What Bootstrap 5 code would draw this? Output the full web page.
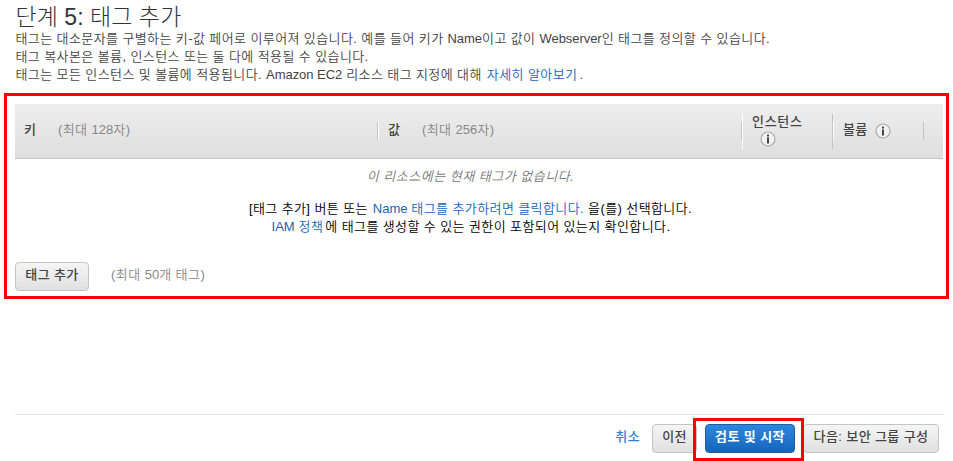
<!DOCTYPE html>
<html lang="ko">
<head>
<meta charset="utf-8">
<meta name="viewport" content="width=device-width, initial-scale=1">
<title>단계 5: 태그 추가</title>
<link href="https://cdn.jsdelivr.net/npm/bootstrap@5.3.0/dist/css/bootstrap.min.css" rel="stylesheet">
<style>
body{font-family:"Liberation Sans","Noto Sans CJK KR",sans-serif;font-size:13px;font-weight:350;line-height:18px;letter-spacing:.4px;color:#444;height:461px;overflow:hidden;background:#fff}
a{color:#1166bb;text-decoration:none}
.latin{letter-spacing:-.05px}
.wizard{height:461px}
.intro{height:93px;padding:5px 0 0 15.5px}
.intro h1{font-size:23px;line-height:25px;font-weight:300;color:#333;letter-spacing:.2px;word-spacing:-.5px}
.intro p{white-space:nowrap}
.intro a{margin:0 2px 0 1px}
.tags-panel{border:3px solid red;margin:0 4px;height:206px;padding:8px 3px 0 8px}
.tags-head{height:55px;background:linear-gradient(#eee,#dedede);border-bottom:1px solid #c4c4c4;font-weight:500}
.tags-head .label{padding-bottom:3px}
.hint{color:#888;font-weight:350;letter-spacing:.45px}
.hint .latin{letter-spacing:0}
.sep-line{width:1px;height:18px;background:#c4c4c4}
.sep-line.light{background:#fff}
.sep-line.tall{height:35px}
.col-key,.col-value{width:362px;padding-left:9px}
.col-key .hint,.col-value .hint{margin-left:21.5px}
.col-inst{width:89px;padding:0 0 2px 9px;letter-spacing:.7px}
.col-vol{width:89px;padding-left:9px}
.info{width:16px;height:16px;display:block}
.col-vol .info{margin-left:7px}
.col-inst .info{margin-left:7.5px}
.empty-state{height:103px;padding:9px 17px 0 0;color:#000;white-space:nowrap}
.empty-state em{color:#777;letter-spacing:.5px}
.guide{margin-top:14px}
.guide a{margin-left:1px}
.guide .policy{margin-right:2px}
.console-btn{height:29px;padding:0 0 3px;font-size:13px;line-height:24px;font-weight:500;letter-spacing:.4px;color:#444;border:1px solid #c4c4c4;border-radius:4px;background:linear-gradient(#f5f5f5,#e0e0e0);white-space:nowrap}
.console-btn.primary{color:#fff;font-weight:700;background:linear-gradient(#2f86dc,#1466bd);border-color:#1a5ea8}
.actions{margin:0 10px 0 15px;border-top:1px solid #e5e5e5;height:47px;padding:9px 4px 0 0;gap:8px}
.cancel{font-weight:500;color:#2e80d8;margin:4px 4px 0 0}
.focus-frame{position:absolute;left:-12px;top:-6px;width:111px;height:43px;border:3px solid red;pointer-events:none}
.btn-add{width:74px}.btn-prev{width:45px}.btn-review{width:90px}.btn-next{width:136px}
.limit{margin:0 0 3px 22px}
</style>
</head>
<body>
<main class="wizard d-flex flex-column">
  <header class="intro">
    <h1 class="m-0">단계 5: 태그 추가</h1>
    <p class="m-0">태그는 대소문자를 구별하는 키-값 페어로 이루어져 있습니다. 예를 들어 키가 <span class="latin">Name</span>이고 값이 <span class="latin">Webserver</span>인 태그를 정의할 수 있습니다.</p>
    <p class="m-0">태그 복사본은 볼륨, 인스턴스 또는 둘 다에 적용될 수 있습니다.</p>
    <p class="m-0">태그는 모든 인스턴스 및 볼륨에 적용됩니다. <span class="latin">Amazon EC2</span> 리소스 태그 지정에 대해 <a href="#">자세히 알아보기</a>.</p>
  </header>
  <section class="tags-panel">
    <div class="tags-head d-flex align-items-center">
      <div class="col-key d-flex label"><span>키</span><span class="hint">(최대 <span class="latin">128</span>자)</span></div>
      <i class="sep-line"></i><i class="sep-line light"></i>
      <div class="col-value d-flex label"><span>값</span><span class="hint">(최대 <span class="latin">256</span>자)</span></div>
      <i class="sep-line"></i><i class="sep-line tall light"></i>
      <div class="col-inst"><div>인스턴스</div>
        <svg class="info" viewBox="0 0 16 16"><circle cx="8" cy="8" r="7" fill="#f1f1f1" stroke="#aaa" stroke-width="1.2"/><path d="M7 3.6h2v2H7zM7 6.4h2v6.2H7z" fill="#444"/></svg>
      </div>
      <i class="sep-line tall"></i><i class="sep-line light"></i>
      <div class="col-vol d-flex align-items-center"><span class="label">볼륨</span>
        <svg class="info" viewBox="0 0 16 16"><circle cx="8" cy="8" r="7" fill="#f1f1f1" stroke="#aaa" stroke-width="1.2"/><path d="M7 3.6h2v2H7zM7 6.4h2v6.2H7z" fill="#444"/></svg>
      </div>
      <i class="sep-line"></i>
    </div>
    <div class="empty-state text-center">
      <em class="d-block">이 리소스에는 현재 태그가 없습니다.</em>
      <div class="guide">
        <div>[태그 추가] 버튼 또는 <a href="#"><span class="latin">Name</span> 태그를 추가하려면 클릭합니다.</a> 을(를) 선택합니다.</div>
        <div><a href="#" class="policy"><span class="latin">IAM</span> 정책</a>에 태그를 생성할 수 있는 권한이 포함되어 있는지 확인합니다.</div>
      </div>
    </div>
    <div class="d-flex align-items-center">
      <button class="btn console-btn btn-add">태그 추가</button>
      <span class="hint limit">(최대 <span class="latin">50</span>개 태그)</span>
    </div>
  </section>
  <footer class="actions d-flex align-items-start justify-content-end mt-auto">
    <a href="#" class="cancel">취소</a>
    <button class="btn console-btn btn-prev">이전</button>
    <div class="position-relative"><button class="btn console-btn primary btn-review">검토 및 시작</button><span class="focus-frame"></span></div>
    <button class="btn console-btn btn-next">다음: 보안 그룹 구성</button>
  </footer>
</main>
<script src="https://cdn.jsdelivr.net/npm/bootstrap@5.3.0/dist/js/bootstrap.bundle.min.js"></script>
</body>
</html>
